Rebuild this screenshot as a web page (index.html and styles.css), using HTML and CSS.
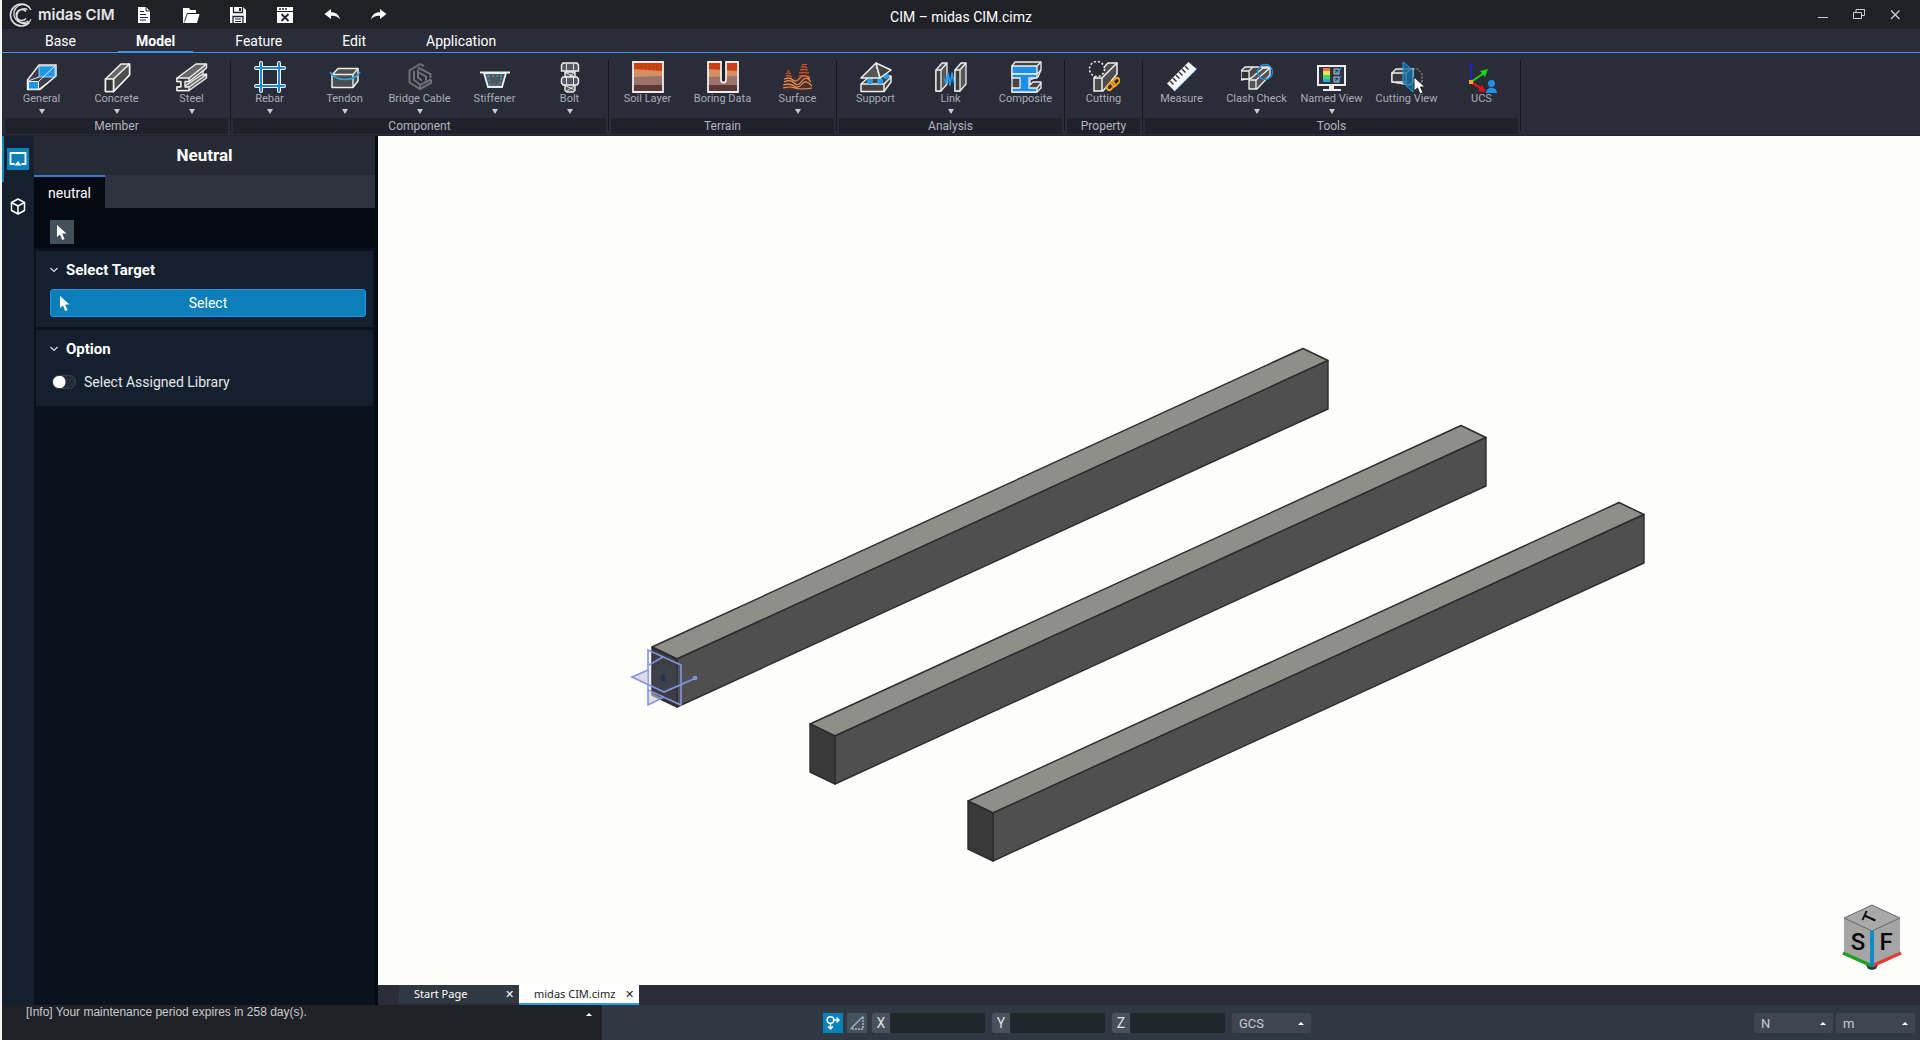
FILE: index.html
```
<!DOCTYPE html>
<html lang="en">
<head>
  <meta charset="UTF-8" />
  <meta name="viewport" content="width=device-width, initial-scale=1.0" />
  <title>CIM – midas CIM.cimz</title>
  <link rel="stylesheet" href="styles.css">
</head>
<body>
<div class="app">

  <header class="titlebar">
    <div class="brand">
      <svg width="24" height="24" viewBox="0 0 24 24" fill="none" stroke="#dfe1e6">
        <path d="M20.500 4.500A11 11 0 1 0 20.500 19.500" stroke-width="1.500"/>
        <path d="M22 7A9 9 0 1 0 19 18" stroke-width="1.300"/>
        <path d="M18.500 6.500A7.500 7.500 0 1 0 22 16.500" stroke-width="1.300"/>
        <path d="M17 8.500A5.500 5.500 0 1 0 17 15.500" stroke-width="1.500"/>
      </svg>
      <span>midas CIM</span>
    </div>
    <div class="quick">
      <button aria-label="New"><svg width="18" height="18" viewBox="0 0 18 18"><path d="M3 1h8l4 4v12H3z" fill="#fff"/><path d="M5 5.500h4M5 8.500h6M5 11.500h8M5 14h6" stroke="#22242c" stroke-width="1.200"/><path d="M11 1v4h4" stroke="#22242c" fill="none"/></svg></button>
      <button aria-label="Open"><svg width="18" height="18" viewBox="0 0 18 18"><path d="M1 2h6l1.500 2H14v3H5L2.500 14V17H1z" fill="#fff"/><path d="M5.500 8H17.500L15 17H2.500z" fill="#fff"/></svg></button>
      <button aria-label="Save"><svg width="18" height="18" viewBox="0 0 18 18"><path d="M1 1h13l3 3v13H1z" fill="#fff"/><path d="M4.500 1v5.500h9V1M4 17v-6.500h10V17" fill="none" stroke="#22242c" stroke-width="1.300"/><path d="M10 2h2v3h-2z" fill="#22242c"/><path d="M6 13h6M6 15.500h6" stroke="#22242c"/></svg></button>
      <button aria-label="Close file"><svg width="18" height="18" viewBox="0 0 18 18"><path d="M1 1h16v16H1z" fill="#fff"/><path d="M1 5.500h16" stroke="#22242c"/><path d="M3 3h2M6 3h2M9 3h2" stroke="#22242c" stroke-width="1.500"/><path d="M5.500 8l7 7M12.500 8l-7 7" stroke="#22242c" stroke-width="1.800"/></svg></button>
      <button aria-label="Undo"><svg width="18" height="18" viewBox="0 0 18 18"><path d="M1.500 8L8 3v3.200c5 0 8 2.500 9 7.300-2-3-5-4-9-3.700V13z" fill="#fff"/></svg></button>
      <button aria-label="Redo"><svg width="18" height="18" viewBox="0 0 18 18"><path d="M16.500 8L10 3v3.200c-5 0-8 2.500-9 7.300 2-3 5-4 9-3.700V13z" fill="#fff"/></svg></button>
    </div>
    <h1 class="doc-title">CIM – midas CIM.cimz</h1>
    <div class="win">
      <button aria-label="Minimize"><svg width="12" height="12" viewBox="0 0 12 12"><path d="M1 8.500h10" stroke="#c8d0da"/></svg></button>
      <button aria-label="Restore"><svg width="12" height="12" viewBox="0 0 12 12" fill="none" stroke="#c8d0da"><path d="M.5 3.500h8v6h-8z"/><path d="M3 3.500v-3h8.500v6H9"/></svg></button>
      <button aria-label="Close"><svg width="12" height="12" viewBox="0 0 12 12"><path d="M2 1.500l8.500 8.500M10.500 1.500L2 10" stroke="#c8d0da" stroke-width="1.300"/></svg></button>
    </div>
  </header>

  <nav class="menu">
    <a href="#">Base</a>
    <a href="#" class="active">Model</a>
    <a href="#">Feature</a>
    <a href="#">Edit</a>
    <a href="#">Application</a>
  </nav>

  <div class="ribbon">
    <section class="group">
      <div class="tools">
        <button class="tool drop">
          <svg viewBox="0 0 32 32"><path d="M13 4h17v11L14 28.500H1.500V19z" fill="#3a3d47" stroke="#eee" stroke-width="1.500"/><path d="M13 5h16v11H13z" fill="#1e96e8" stroke="#cfe6f8" stroke-width=".8"/><path d="M2.500 20.500h10v7.500h-10z" fill="#1e96e8" stroke="#eee"/><path d="M12.500 20.500L29 5M2 20L13 16M13 28L29 16" stroke="#eee" fill="none"/></svg>
          General
        </button>
        <button class="tool drop">
          <svg viewBox="0 0 32 32" stroke="#eee" stroke-width="1.600" stroke-linejoin="round"><path d="M4.500 18L20 3h8.500v11L12.500 30.500h-8z" fill="#666"/><path d="M12.500 18L28.500 3v11L12.500 30.500z" fill="#4b4b4b"/><path d="M4.500 18h8v12.500h-8z" fill="#333"/></svg>
          Concrete
        </button>
        <button class="tool drop">
          <svg viewBox="0 0 32 32" stroke="#eee" stroke-width="1.400" stroke-linejoin="round"><path d="M1 17L20 3h10.500v4L27 10v4l3.500-1v4L13 29.500H1V26h4v-5.500H1z" fill="#666"/><path d="M1 17h12v3.500H9V26h4v3.500H1V26h4v-5.500H1z" fill="#333"/><path d="M13 17L30 3.500M13 20.500L28 9M9 25l18-12M13 26l17-12" fill="none"/></svg>
          Steel
        </button>
      </div>
      <h2>Member</h2>
    </section>

    <section class="group">
      <div class="tools">
        <button class="tool drop">
          <svg viewBox="0 0 32 32" stroke-linecap="round"><g stroke="#f2f6fa" stroke-width="4"><path d="M7 2v28M25 2v28M2 7h28M2 25h28"/></g><g stroke="#1e86d8" stroke-width="2"><path d="M2 7h28M2 25h28M7 2v28M25 2v28"/></g></svg>
          Rebar
        </button>
        <button class="tool drop">
          <svg viewBox="0 0 32 32" stroke-linejoin="round"><path d="M3 14L9 7.500h20V20l-5 6.500H3z" fill="#4d4d4d" stroke="#eee" stroke-width="1.500"/><path d="M3 13.500h21l5-6M24 13.500v13" fill="none" stroke="#eee" stroke-width="1.300"/><path d="M1 11c6 10 24 10 30 0" fill="none" stroke="#2aa3e8" stroke-width="1.600"/></svg>
          Tendon
        </button>
        <button class="tool drop">
          <svg viewBox="0 0 32 32" fill="none" stroke="#6d7079" stroke-width="2"><path d="M16 3L5.500 9.500v12L16 28l11-6v-3.500M16 3l4 2M16 28v-4l11-5.500"/><path d="M14 6.500L26.500 13v4M10 10v9l6 4.500M14 8.500v8l4 3M14 11l8 4.500v4" /></svg>
          Bridge Cable
        </button>
        <button class="tool drop">
          <svg viewBox="0 0 32 32"><path d="M5 12h22l-4 14H9z" fill="#555" stroke="#eee" stroke-width="1.800"/><path d="M1 11.500h30" stroke="#eee" stroke-width="2"/><path d="M9 15h14l-2.500 9h-9z" fill="none" stroke="#1e9cf0" stroke-width="1.500" stroke-dasharray="2 2"/></svg>
          Stiffener
        </button>
        <button class="tool drop">
          <svg viewBox="0 0 32 32" fill="#555961" stroke="#eee" stroke-width="1.400"><path d="M9 2h14l1.500 2v6H7.500V4z"/><path d="M11 11h10v5H11zM11 23h10v6.500l-2 1.500h-6l-2-1.500z"/><path d="M9 16h14l1.500 2v4L23 24H9l-1.500-2v-4z"/><path d="M12.500 2.500v7M19.500 2.500v7M12.500 16v8M19.500 16v8M12 12l8 3.500M12 25l8 3.500M20 12l-4 3M20 25l-7 5" stroke-width=".9"/></svg>
          Bolt
        </button>
      </div>
      <h2>Component</h2>
    </section>

    <section class="group">
      <div class="tools">
        <button class="tool">
          <svg viewBox="0 0 32 32"><path d="M1 1h30v30H1z" fill="#d28f64"/><path d="M1 1h30v9L1 8z" fill="#cc3d10"/><path d="M1 16l30-1v9H1z" fill="#96736c"/><path d="M1 24h30v7H1z" fill="#5d3936"/><path d="M3 5h26M3 8h26M4 18h26M3 21h26" stroke="#e0682a" stroke-dasharray="1 3" stroke-width=".8"/><path d="M1 1h30v30H1z" fill="none" stroke="#eee" stroke-width="1.800"/></svg>
          Soil Layer
        </button>
        <button class="tool">
          <svg viewBox="0 0 32 32"><path d="M1 1h30v30H1z" fill="#d28f64"/><path d="M1 1h30v9L1 8z" fill="#cc3d10"/><path d="M1 16l30-1v9H1z" fill="#96736c"/><path d="M1 24h30v7H1z" fill="#5d3936"/><path d="M3 5h26M4 18h26M3 21h26" stroke="#e0682a" stroke-dasharray="1 3" stroke-width=".8"/><path d="M14 0v19q0 2.500 2.500 2.500T19 19V0z" fill="#20222b"/><path d="M1 1h13v18q0 2.500 2.500 2.500T19 19V1h12v30H1z" fill="none" stroke="#eee" stroke-width="1.800"/></svg>
          Boring Data
        </button>
        <button class="tool drop">
          <svg viewBox="0 0 32 32"><path d="M1 29l3-18 3-2 3 8 6-1 2-9 3-4 3 2 3 8 3 16z" fill="#4a2f2c"/><g fill="none" stroke="#e8935a" stroke-width="1.200"><path d="M2 18q6-2 9 1t7-2 10 1M2 21q6-3 10 1t8-2 9 1M1 24q7-2 11 1t8-2 10 2M1 27q7-2 12 0t17 0"/></g><g fill="none" stroke="#e2542a" stroke-width="1.200"><path d="M5 10h3M4 12.500q2-1 5 0M4 15q3-1 6 1M20 3.500h5M19 6q4-1 6 1M18 9q4-1 8 0M17 12q5-1 10 0M17 15q5-1 11 1"/></g></svg>
          Surface
        </button>
      </div>
      <h2>Terrain</h2>
    </section>

    <section class="group">
      <div class="tools">
        <button class="tool">
          <svg viewBox="0 0 32 32" stroke="#eee" stroke-width="1.500" stroke-linejoin="round"><path d="M1 23l9-8h21v6l-7 9.500H1z" fill="#444"/><path d="M1 23h23l7-7M24 23v7.500" fill="none"/><circle cx="10" cy="20" r="3" fill="#1ea0f0" stroke="none"/><circle cx="20" cy="20" r="3" fill="#1ea0f0" stroke="none"/><circle cx="26" cy="15" r="3" fill="#1ea0f0" stroke="none"/><path d="M16 2L1 17h19z" fill="#555"/><path d="M16 2l4 15L31 9z" fill="#444"/></svg>
          Support
        </button>
        <button class="tool drop">
          <svg viewBox="0 0 32 32" stroke="#eee" stroke-width="1.300" stroke-linejoin="round"><path d="M1 9l6-7h5v21l-6 7H1zM20 9l6-7h5v21l-6 7h-5z" fill="#555"/><path d="M1 9h5v21H1zM20 9h5v21h-5z" fill="#3d3d3d"/><path d="M6 9l6-7M25 9l6-7" /><path d="M9 17l2 5 2-10 2 12 2-12 2 10" fill="none" stroke="#1e9cf0" stroke-width="1.600"/></svg>
          Link
        </button>
        <button class="tool">
          <svg viewBox="0 0 32 32" stroke="#eee" stroke-width="1.300" stroke-linejoin="round"><path d="M2 5l3-4h26v8l-3 7-8 3v5l3-3h8v6l-4 4H2z" fill="#444"/><path d="M2 5h25v8H2z" fill="#1e8fe6"/><path d="M2 13h25v4h-8v10h8v4H2v-4h8V17H2z" fill="#1e8fe6"/><path d="M27 5l4-4M27 13l4-4M27 27l4-5" /></svg>
          Composite
        </button>
      </div>
      <h2>Analysis</h2>
    </section>

    <section class="group">
      <div class="tools">
        <button class="tool">
          <svg viewBox="0 0 32 32"><path d="M6 17L20 2h9v11L15 30H6z" fill="#4d4d4d" stroke="#eee" stroke-width="1.500"/><path d="M6 17h8v13M14 17L29 2" fill="none" stroke="#eee" stroke-width="1.500"/><circle cx="9" cy="8" r="7.500" fill="#2a2c36" stroke="#eee" stroke-width="1.600" stroke-dasharray="2 2"/><g fill="none" stroke="#f0a01e" stroke-width="2"><rect x="18" y="23" width="9" height="5" rx="2.500" transform="rotate(-45 22 25)"/><rect x="23" y="19" width="9" height="5" rx="2.500" transform="rotate(-45 27 21)"/></g></svg>
          Cutting
        </button>
      </div>
      <h2>Property</h2>
    </section>

    <section class="group">
      <div class="tools">
        <button class="tool">
          <svg viewBox="0 0 32 32"><path d="M8.500 31L30.500 9v-3L7 28z" fill="#1e8fe6"/><path d="M22.500 1l8 7L8.500 30 1 22.500z" fill="#f6f6f6"/><path d="M4 20l3.500 3.500M7 17l3.500 3.500M10 14l3.500 3.500M13 11l3.500 3.500M16 8l3.500 3.500M19 5l3.500 3.500" stroke="#2b2d37" stroke-width="1.400"/></svg>
          Measure
        </button>
        <button class="tool drop">
          <svg viewBox="0 0 32 32" stroke="#eee" stroke-width="1.300" stroke-linejoin="round"><path d="M0 10l4-4h25l-3 8-26 5z" fill="#4a4a4a"/><path d="M0 10h8v8H0zM8 10l4-4" fill="#333"/><path d="M8 19l14-12h7v7L16 28H8z" fill="#555"/><path d="M8 19h7v9M15 19L29 7" fill="none"/><circle cx="24" cy="11" r="7.500" fill="none" stroke="#1e8fe6"/></svg>
          Clash Check
        </button>
        <button class="tool drop">
          <svg viewBox="0 0 32 32"><path d="M2 5h27v19H2z" fill="#30333d" stroke="#eee" stroke-width="2"/><path d="M13 25h5v3h7v2H7v-2h6z" fill="#eee"/><path d="M7 7h7v3H7z" fill="#f07848"/><path d="M7 10h7v4H7z" fill="#f4e060"/><path d="M7 14h7v4H7z" fill="#3edc54"/><path d="M7 18h7v3H7z" fill="#28a8f0"/><path d="M18 8h5v5h-5zM18 16h5v5h-5z" fill="none" stroke="#ccc"/><path d="M19 10l2 2 4-5M19 18l2 2 4-5" fill="none" stroke="#2aa3f0" stroke-width="1.200"/></svg>
          Named View
        </button>
        <button class="tool">
          <svg viewBox="0 0 32 32"><path d="M1 12l4-4h17v13l-3 3-18-3z" fill="#444" stroke="#eee" stroke-width="1.400"/><path d="M1 12h14v9H1zM15 12l5-4" fill="#383838" stroke="#eee" stroke-width="1.400"/><path d="M12 1l10 8v22l-10-9z" fill="#176c9e" fill-opacity=".8" stroke="#1ea0e8"/><path d="M22 8h5l4 5v9h-8" fill="none" stroke="#aaa" stroke-dasharray="2 1.500"/></svg>
          Cutting View
          <svg class="cursor" viewBox="0 0 13 19"><path d="M1 1v14l3.500-3 2.500 6 3-1.300L7.500 11H12z" fill="#fff" stroke="#222"/></svg>
        </button>
        <button class="tool">
          <svg viewBox="0 0 32 32"><path d="M5 21V5" stroke="#1c24b0" stroke-width="2"/><path d="M5 1l3 6H2z" fill="#1c24b0"/><path d="M5 21L18 12" stroke="#14d814" stroke-width="2"/><path d="M22 8l-3 8-5-6z" fill="#14d814"/><path d="M5 21l11 7" stroke="#e01010" stroke-width="2.500"/><path d="M20 31l-8-1 4-6z" fill="#e01010"/><path d="M3 19h4v4H3z" fill="#ffa81e"/><circle cx="25.500" cy="22.500" r="3.500" fill="#1e8fe6"/><path d="M20 32c0-7 11-7 11 0z" fill="#1e8fe6"/></svg>
          UCS
        </button>
      </div>
      <h2>Tools</h2>
    </section>
  </div>

  <main class="work">
    <nav class="rail">
      <button class="rail-item active" aria-label="Function panel">
        <svg width="22" height="22" viewBox="0 0 22 22"><path d="M7.500 16H3.500V5h15v11h-4" fill="none" stroke="#fff" stroke-width="1.800"/><path d="M11 13l3.500 4.500h-7z" fill="#fff"/></svg>
      </button>
      <button class="rail-item" aria-label="Objects">
        <svg width="22" height="22" viewBox="0 0 22 22" fill="none" stroke="#fff" stroke-width="1.500" stroke-linejoin="round"><path d="M11 4l6.500 3.500v8L11 19l-6.500-3.500v-8zM4.500 7.500L11 11l6.500-3.500M11 11v8"/></svg>
      </button>
    </nav>

    <aside class="panel">
      <h2 class="panel-title">Neutral</h2>
      <div class="panel-tabs"><button class="panel-tab">neutral</button></div>
      <div class="panel-tools">
        <button class="pick" aria-label="Pick"><svg width="10" height="15" viewBox="0 0 10 15"><path d="M0 0v12l3-2.500L5.200 15l2.300-1L5.200 8.500H9.500z" fill="#fff"/></svg></button>
      </div>
      <section class="card">
        <h3><svg width="8" height="6" viewBox="0 0 8 6"><path d="M.5 1L4 4.500 7.500 1" fill="none" stroke="#dde" stroke-width="1.200"/></svg>Select Target</h3>
        <button class="select-btn"><svg width="10" height="15" viewBox="0 0 10 15"><path d="M0 0v12l3-2.500L5.200 15l2.300-1L5.200 8.500H9.500z" fill="#fff"/></svg><span>Select</span></button>
      </section>
      <section class="card">
        <h3><svg width="8" height="6" viewBox="0 0 8 6"><path d="M.5 1L4 4.500 7.500 1" fill="none" stroke="#dde" stroke-width="1.200"/></svg>Option</h3>
        <label class="switch"><input type="checkbox">Select Assigned Library</label>
      </section>
    </aside>

    <div class="stage">
      <div class="viewport">
        <svg class="scene" viewBox="378 136 1542 849" preserveAspectRatio="xMidYMid slice">
          <defs>
            <g id="beam" stroke="#2c2c2c" stroke-width="1.400" stroke-linejoin="round">
              <path d="M810 724L1461 425.500 1486 437.500 835 736z" fill="#8e8f89"/>
              <path d="M835 736L1486 437.500V486L835 784z" fill="#4f4f4f"/>
              <path d="M810 724l25 12v48l-25-12z" fill="#3a3a3a"/>
            </g>
          </defs>
          <use href="#beam" x="-158" y="-77"/>
          <use href="#beam"/>
          <use href="#beam" x="158" y="77"/>
          <!-- work planes at the beam start -->
          <g fill="#6a7fd0" fill-opacity=".06" stroke="#8296e0" stroke-width="1.600">
            <path d="M648 650l33 15v40l-33-15z"/>
            <path d="M632 677l31-14 33 15-32 14z" stroke="none"/>
            <path d="M632 677l16-7v14zM648 691l14 7-14 7z" fill="#c8cbd8" fill-opacity=".6" stroke="none"/>
            <path d="M663 657l-14 8M648 690v15l16-8M648 670l-16 7 32 15 32-14" fill="none"/>
            <circle cx="695" cy="678" r="1.500"/>
          </g>
          <path d="M660 677l3-4 3 4-1 4-3 1z" fill="#26334f"/>
        </svg>
        <svg class="navcube" viewBox="0 0 60 66">
          <circle cx="30" cy="60" r="6" fill="#2b3a4c"/>
          <path d="M30 1l28 13v35L30 62 2 49V14z" fill="#a5a5a5"/>
          <path d="M30 1l28 13-28 13L2 14z" fill="#a9a9a9" stroke="#555" stroke-width=".8"/>
          <path d="M30 62L1 49" stroke="#22a022" stroke-width="3.500"/>
          <path d="M30 62l29-13" stroke="#dc4034" stroke-width="3.500"/>
          <path d="M30 27v35" stroke="#0a8cc4" stroke-width="4"/>
          <text x="16" y="46">S</text>
          <text x="44" y="46">F</text>
          <text class="top" x="28" y="20" transform="rotate(-65 28 14)">T</text>
        </svg>
      </div>
      <div class="doc-tabs">
        <div class="doc-tab"><a href="#">Start Page</a><button aria-label="Close Start Page">✕</button></div>
        <div class="doc-tab active"><a href="#">midas CIM.cimz</a><button aria-label="Close midas CIM.cimz">✕</button></div>
      </div>
    </div>
  </main>

  <footer class="footer">
    <div class="log">
      <p>[Info] Your maintenance period expires in 258 day(s).</p>
      <button class="log-up" aria-label="Expand log"></button>
    </div>
    <div class="status">
      <div class="coords">
        <button class="snap on" aria-label="Snap"><svg width="20" height="20" viewBox="0 0 20 20" fill="none" stroke="#fff" stroke-width="1.500"><circle cx="7.500" cy="7" r="3.300"/><path d="M11 7h5M7.500 11v5M13.500 4.500L16 7l-2.500 2.500M5 13.500L7.500 16l2.500-2.500"/></svg></button>
        <button class="snap" aria-label="Ortho"><svg width="20" height="20" viewBox="0 0 20 20" fill="none"><path d="M3.500 16L16 3.500" stroke="#8fb8e8" stroke-width="1.300"/><path d="M16 4v12H4" stroke="#e4e8ee" stroke-dasharray="2 1"/></svg></button>
        <label class="coord"><span>X</span><input type="text"></label>
        <label class="coord"><span>Y</span><input type="text"></label>
        <label class="coord"><span>Z</span><input type="text"></label>
        <span class="pick-list"><select aria-label="Coordinate system"><option>GCS</option></select></span>
      </div>
      <div class="units">
        <span class="pick-list"><select aria-label="Force unit"><option>N</option></select></span>
        <span class="pick-list"><select aria-label="Length unit"><option>m</option></select></span>
      </div>
    </div>
  </footer>

</div>
</body>
</html>
```
FILE: styles.css
```
* {
  margin: 0;
  padding: 0;
  box-sizing: border-box;
}

body {
  background: #f4f5f5;
  font-family: Roboto, "Liberation Sans", sans-serif;
  font-size: 14px;
  color: #fff;
}

button,
input,
select {
  font: inherit;
  color: inherit;
  background: none;
  border: none;
}

a {
  color: inherit;
  text-decoration: none;
}

svg {
  display: block;
  flex: none;
}

.app {
  min-height: 100vh;
  display: flex;
  flex-direction: column;
  padding-left: 2px;
}

/* title bar */
.titlebar {
  display: grid;
  grid-template-columns: 1fr auto 1fr;
  align-items: center;
  height: 29px;
  background: #202127;
}

.brand {
  display: flex;
  align-items: center;
  gap: 5px;
  padding-left: 7px;
  font-family: Inter, sans-serif;
  font-size: 15px;
  font-weight: 600;
  color: #e4e5e8;
  grid-area: 1 / 1;
}

.quick {
  display: flex;
  margin-left: 118px;
  grid-area: 1 / 1;
  justify-self: start;
}

.quick button {
  width: 47px;
  height: 29px;
  display: grid;
  place-items: center;
}

.doc-title {
  grid-column: 2;
  font-size: 14px;
  line-height: 20px;
  font-weight: 400;
  padding-top: 5px;
}

.win {
  grid-column: 3;
  justify-self: end;
  display: flex;
  padding-right: 7px;
}

.win button {
  width: 36px;
  height: 29px;
  display: grid;
  place-items: center;
}

/* menu */
.menu {
  display: flex;
  gap: 24px;
  padding-left: 25px;
  background: #2a2d38;
  border-bottom: 1px solid #3a94ee;
  line-height: 21px;
}

.menu a {
  padding: 2px 18px 0;
}

.menu .active {
  font-weight: 700;
  box-shadow: inset 0 -1px #3a94ee;
}

/* ribbon */
.ribbon {
  display: flex;
  padding: 0 0 1px 1px;
  background: #2a2c37;
  border-bottom: 1px solid #1d2530;
}

.group {
  padding: 0 2px 0 1px;
  position: relative;
}

.group::after {
  content: "";
  position: absolute;
  right: 0;
  top: 7px;
  bottom: 3px;
  width: 1px;
  background: #15171f;
}

.tools {
  display: flex;
  padding: 8px 0 1px;
}

.tool {
  position: relative;
  width: 75px;
  height: 56px;
  display: flex;
  flex-direction: column;
  align-items: center;
  font-size: 11px;
  line-height: 12px;
  color: #a9adb8;
  white-space: nowrap;
}

.tool svg {
  width: 32px;
  height: 32px;
}

.drop::after {
  content: "";
  margin-top: 4px;
  border: 3px solid transparent;
  border-top: 5px solid #c9ccd2;
  border-bottom: 0;
}

.tool .cursor {
  position: absolute;
  left: 44px;
  top: 15px;
  width: 13px;
  height: 19px;
}

.group h2 {
  margin: 0 1px;
  background: #20212a;
  color: #b0b4be;
  font-size: 12px;
  font-weight: 400;
  line-height: 16px;
  text-align: center;
}

/* work area */
.work {
  flex: 1;
  display: flex;
}

.rail {
  width: 32px;
  background: #14202d;
}

.rail-item {
  width: 32px;
  height: 47px;
  display: grid;
  place-items: center;
  border-bottom: 1px solid #1c2229;
}

.rail-item.active {
  box-shadow: inset 2px 0 #0c86c0;
}

.active svg {
  background: #0c80ba;
}

.panel {
  width: 344px;
  background: #0a121e;
  border-right: 3px solid #030a12;
}

.panel-title {
  background: #262a34;
  font-size: 17px;
  font-weight: 700;
  line-height: 39px;
  text-align: center;
}

.panel-tabs {
  background: #2e333e;
}

.panel-tab {
  display: block;
  width: 71px;
  height: 33px;
  background: #030a12;
  border-top: 2px solid #3a7bd0;
}

.panel-tools {
  background: #030a12;
  padding: 12px 16px 4px;
}

.pick {
  width: 24px;
  height: 24px;
  display: grid;
  place-items: center;
  background: #42505a;
}

.card {
  margin: 3px 2px 0;
  padding: 9px 7px 10px 14px;
  background: #14202d;
  min-height: 76px;
}

.card h3 {
  display: flex;
  align-items: center;
  gap: 8px;
  font-size: 15px;
  font-weight: 700;
  line-height: 20px;
}

.select-btn {
  width: 100%;
  height: 28px;
  margin-top: 9px;
  padding: 0 9px;
  display: flex;
  align-items: center;
  background: #0c7fb8;
  border: 1px solid #1e96ea;
  border-radius: 3px;
}

.select-btn span {
  flex: 1;
  padding-right: 10px;
}

.switch {
  display: flex;
  align-items: center;
  gap: 8px;
  margin-top: 13px;
  padding-left: 2px;
  line-height: 20px;
  color: #e6e8ec;
}

.switch input {
  appearance: none;
  width: 24px;
  height: 14px;
  border: 1px solid #3a4252;
  border-radius: 7px;
  background: radial-gradient(circle at 6px 6px, #fff 6px, #262c3a 7px);
}

/* model view */
.stage {
  flex: 1;
  display: flex;
  flex-direction: column;
  min-width: 0;
}

.viewport {
  flex: 1;
  position: relative;
  background: #fdfdfc;
  min-height: 400px;
}

.scene {
  position: absolute;
  width: 100%;
  height: 100%;
}

.navcube {
  position: absolute;
  right: 18px;
  bottom: 15px;
  width: 60px;
  height: 66px;
}

.navcube text {
  font-size: 24px;
  font-weight: 500;
  text-anchor: middle;
  fill: #0a0a0a;
}

.navcube .top {
  font-size: 18px;
}

.doc-tabs {
  display: flex;
  padding-left: 21px;
  height: 20px;
  background: #2a2c37;
}

.doc-tab {
  width: 120px;
  display: flex;
  justify-content: space-between;
  align-items: center;
  padding: 0 5px 0 15px;
  background: #303842;
  border-bottom: 2px solid #2a3038;
  font-family: "Noto Sans", sans-serif;
  font-size: 11px;
  line-height: 16px;
}

.doc-tab.active {
  background: #fff;
  color: #222;
  border-color: #2a9ee8;
}

/* footer */
.footer {
  display: flex;
  height: 35px;
}

.log {
  width: 600px;
  display: flex;
  justify-content: space-between;
  align-items: flex-start;
  padding: 0 10px 0 24px;
  background: #202127;
  color: #c8cbd0;
  font-family: "Liberation Sans", sans-serif;
  font-size: 12px;
  line-height: 14px;
}

.log-up {
  margin-top: 8px;
  border: 3px solid transparent;
  border-bottom: 3px solid #fff;
  border-top: 0;
}

.status {
  flex: 1;
  display: flex;
  justify-content: space-between;
  padding: 8px 5px 7px 221px;
  background: #303843;
}

.coords,
.units {
  display: flex;
}

.units {
  gap: 3px;
}

.snap {
  width: 20px;
  height: 20px;
  margin-right: 5px;
  background: #45535c;
}

.snap.on {
  margin-right: 4px;
  background: #0c80ba;
}

.coord {
  display: flex;
  width: 113px;
  height: 20px;
  margin-right: 7px;
  background: #20262a;
  border-radius: 2px;
  overflow: hidden;
}

.coord span {
  width: 18px;
  background: #4a505c;
  line-height: 21px;
  text-align: center;
  color: #dde0e6;
}

.coord input {
  flex: 1;
  min-width: 0;
}

.pick-list {
  position: relative;
  width: 79px;
  height: 20px;
}

.pick-list select {
  appearance: none;
  width: 100%;
  height: 20px;
  padding-left: 7px;
  background: #414552;
  border-radius: 2px;
  color: #c4ccd8;
  font-size: 13px;
}

.pick-list::after {
  content: "";
  position: absolute;
  right: 7px;
  top: 9px;
  border: 3px solid transparent;
  border-bottom: 3px solid #fff;
  border-top: 0;
}
```
